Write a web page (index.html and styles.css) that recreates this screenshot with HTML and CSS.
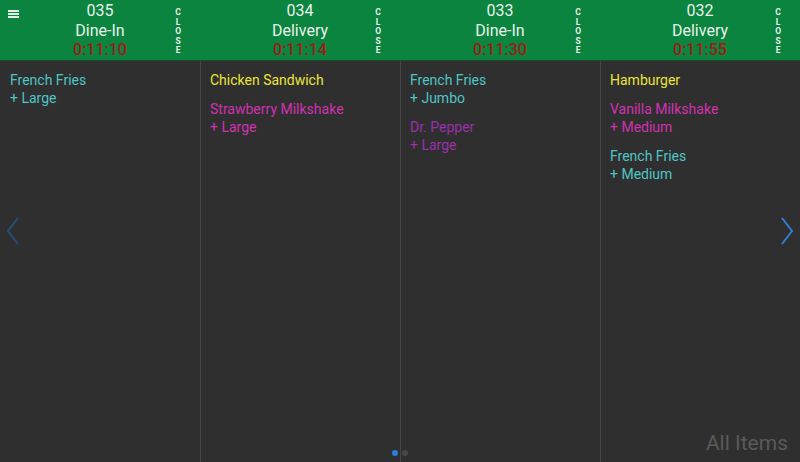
FILE: index.html
```html
<!DOCTYPE html>
<html>
<head>
<meta charset="utf-8">
<link rel="stylesheet" href="styles.css">
</head>
<body>
<div class="app">
  <div class="board">
    <div class="ticket">
      <div class="head">
        <div class="menu"><span></span><span></span><span></span></div>
        <div class="info">
          <div class="num">035</div>
          <div class="type">Dine-In</div>
          <div class="timer">0:11:10</div>
        </div>
        <div class="close"><span>C</span><span>L</span><span>O</span><span>S</span><span>E</span></div>
      </div>
      <div class="items">
        <div class="item cyan">French Fries<br>+ Large</div>
      </div>
    </div>
    <div class="ticket">
      <div class="head">
        <div class="info">
          <div class="num">034</div>
          <div class="type">Delivery</div>
          <div class="timer">0:11:14</div>
        </div>
        <div class="close"><span>C</span><span>L</span><span>O</span><span>S</span><span>E</span></div>
      </div>
      <div class="items">
        <div class="item yellow">Chicken Sandwich</div>
        <div class="item magenta">Strawberry Milkshake<br>+ Large</div>
      </div>
    </div>
    <div class="ticket">
      <div class="head">
        <div class="info">
          <div class="num">033</div>
          <div class="type">Dine-In</div>
          <div class="timer">0:11:30</div>
        </div>
        <div class="close"><span>C</span><span>L</span><span>O</span><span>S</span><span>E</span></div>
      </div>
      <div class="items">
        <div class="item cyan">French Fries<br>+ Jumbo</div>
        <div class="item purple">Dr. Pepper<br>+ Large</div>
      </div>
    </div>
    <div class="ticket">
      <div class="head">
        <div class="info">
          <div class="num">032</div>
          <div class="type">Delivery</div>
          <div class="timer">0:11:55</div>
        </div>
        <div class="close"><span>C</span><span>L</span><span>O</span><span>S</span><span>E</span></div>
      </div>
      <div class="items">
        <div class="item yellow">Hamburger</div>
        <div class="item magenta">Vanilla Milkshake<br>+ Medium</div>
        <div class="item cyan">French Fries<br>+ Medium</div>
      </div>
    </div>
  </div>
  <svg class="arrow left" width="14" height="28" viewBox="0 0 14 28"><path d="M12 1 L2 14 L12 27" fill="none" stroke="#284d7c" stroke-width="2"/></svg>
  <svg class="arrow right" width="14" height="28" viewBox="0 0 14 28"><path d="M2 1 L12 14 L2 27" fill="none" stroke="#2b7fd4" stroke-width="2"/></svg>
  <div class="dots"><span class="dot on"></span><span class="dot"></span></div>
  <div class="all">All Items</div>
</div>
</body>
</html>
```
FILE: styles.css
```css
* { box-sizing: border-box; }
html, body { margin: 0; padding: 0; }
body {
  width: 800px;
  height: 462px;
  overflow: hidden;
  background: #2f2f2f;
  font-family: Roboto, "Noto Sans", sans-serif;
}
.app {
  position: relative;
  width: 800px;
  height: 462px;
}
.board {
  display: flex;
  height: 100%;
}
.ticket {
  width: 200px;
  display: flex;
  flex-direction: column;
  border-left: 1px solid #474747;
}
.ticket:first-child { border-left: none; }
.head {
  position: relative;
  height: 61px;
  background: #0a843f;
  display: flex;
  justify-content: center;
  border-bottom: 1px solid #1e4a2c;
}
.ticket + .ticket .head { margin-left: -1px; }
.info {
  padding-top: 1px;
  text-align: center;
  font-size: 16px;
  line-height: 19.5px;
  color: #e8f2ea;
}
.timer {
  color: #9c1c1a;
  font-weight: 500;
}
.menu {
  position: absolute;
  left: 8px;
  top: 10px;
  width: 11px;
  display: flex;
  flex-direction: column;
  gap: 1.5px;
}
.menu span {
  display: block;
  height: 1.5px;
  background: #e6f2e8;
}
.close {
  position: absolute;
  right: 19px;
  top: 8px;
  display: flex;
  flex-direction: column;
  align-items: center;
  font-size: 8.5px;
  font-weight: 700;
  line-height: 9.6px;
  color: #e8f2ea;
}
.items {
  flex: 1;
  padding: 10px 10px;
  font-size: 14px;
  line-height: 18px;
}
.ticket + .ticket .items { padding-left: 9px; }
.item + .item { margin-top: 11px; }
.cyan { color: #4ec5c6; }
.yellow { color: #ece33a; }
.magenta { color: #d231b2; }
.purple { color: #9a30ad; }
.arrow {
  position: absolute;
  top: 217px;
}
.arrow.left { left: 6px; }
.arrow.right { left: 780px; }
.dots {
  position: absolute;
  left: 392px;
  top: 450px;
  display: flex;
  gap: 4px;
}
.dot {
  width: 6px;
  height: 6px;
  border-radius: 50%;
  background: #474747;
}
.dot.on { background: #2a7fe0; }
.all {
  position: absolute;
  right: 12px;
  bottom: 7px;
  font-size: 21px;
  color: #5a5a5a;
}
```
